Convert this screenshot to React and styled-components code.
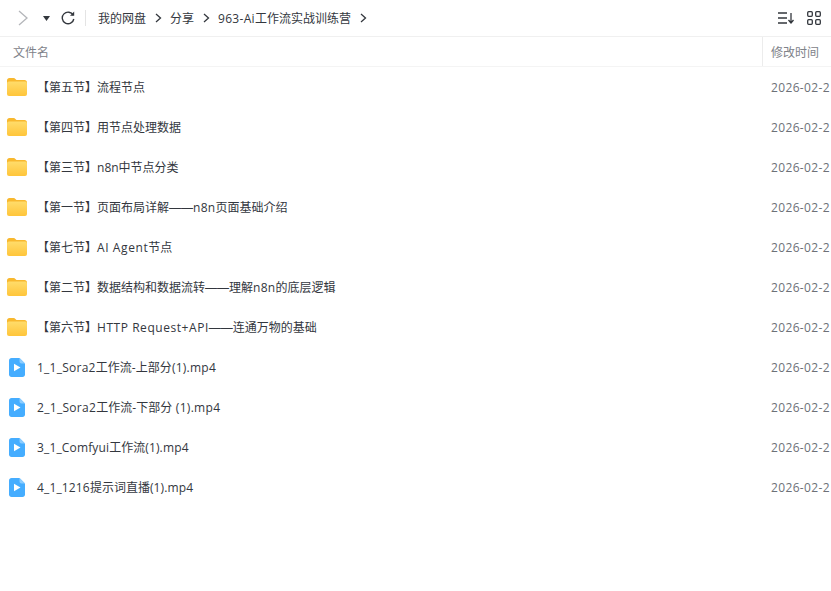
import styled, { createGlobalStyle } from "styled-components";

const GlobalStyle = createGlobalStyle`
	html, body {
		margin: 0;
		height: 100%;
		background: #fff;
		overflow: hidden;
	}
	body {
		font-family: "Noto Sans CJK SC", sans-serif;
	}
`;

const Page = styled.div`
	width: 831px;
	height: 591px;
	overflow: hidden;
	color: #33373e;
`;

const Toolbar = styled.div`
	display: flex;
	align-items: center;
	height: 36px;
	border-bottom: 1px solid #f0f0f0;
	padding-left: 18px;
`;

const NavButton = styled.span`
	display: flex;
	align-items: center;
	justify-content: center;
	margin-left: ${(p) => p.$gap || 0}px;
`;

const Divider = styled.span`
	width: 1px;
	height: 16px;
	background: #e4e4e4;
	margin: 0 12px 0 10px;
`;

const Crumbs = styled.div`
	display: flex;
	align-items: center;
	flex: 1;
	font-size: 12px;
	line-height: 20px;
	color: #33373e;
`;

const Crumb = styled.span`
	display: flex;
	align-items: center;
	white-space: nowrap;
`;

const CrumbArrow = styled.svg`
	width: 7px;
	height: 10px;
	margin: 0 8px 0 9px;
`;

const ToolIcons = styled.div`
	display: flex;
	align-items: center;
	gap: 13px;
	padding-right: 10px;
`;

const HeaderRow = styled.div`
	display: flex;
	align-items: stretch;
	height: 29px;
	border-bottom: 1px solid #f4f4f4;
	font-size: 12px;
	color: #7e8289;
`;

const NameHead = styled.div`
	flex: 1;
	display: flex;
	align-items: center;
	padding-left: 13px;
`;

const DateHead = styled.div`
	width: 60px;
	display: flex;
	align-items: center;
	padding-left: 8px;
	border-left: 1px solid #ececec;
`;

const List = styled.div`
	display: flex;
	flex-direction: column;
`;

const Row = styled.div`
	display: flex;
	align-items: center;
	height: 40px;
	font-size: 12px;
	line-height: 20px;
`;

const IconCell = styled.div`
	width: 37px;
	flex: none;
	display: flex;
	align-items: center;
	padding-left: ${(p) => (p.$video ? 9 : 7)}px;
	box-sizing: border-box;
`;

const Name = styled.div`
	flex: 1;
	white-space: nowrap;
	color: #33373e;
`;

// the latin runs are set a bit wider than the font gives them
const Latin = styled.span`
	font-family: "Open Sans", sans-serif;
	line-height: 1;
	letter-spacing: ${(p) => p.$tracking ?? 0.3}px;
`;

const Dash = styled.span`
	font-family: "Liberation Sans", sans-serif;
	line-height: 1;
`;

const DateCell = styled.div`
	width: 60px;
	white-space: nowrap;
	color: #6d7178;
	overflow: hidden;
`;

const Mixed = ({ text, tracking }) =>
	text.split(/([\x20-\x7e]+|——)/).map((part, i) => {
		if (i % 2 === 0) return part;
		if (part === "——") return <Dash key={i}>{part}</Dash>;
		return (
			<Latin key={i} $tracking={tracking}>
				{part}
			</Latin>
		);
	});

const FolderIcon = () => (
	<svg width="20" height="18" viewBox="0 0 20 18">
		<defs>
			<linearGradient id="folderFront" x1="0" y1="0" x2="0" y2="1">
				<stop offset="0" stopColor="#ffdc6b" />
				<stop offset="1" stopColor="#ffc53a" />
			</linearGradient>
		</defs>
		<path
			d="M0 2.500C0 1.100 1 0 2.400 0h4.200c.8 0 1.300.3 1.800.9L9.500 2H17.500C19 2 20 3 20 4.500V8H0Z"
			fill="#f8b82e"
		/>
		<rect x="0" y="3.500" width="20" height="14.500" rx="2" fill="url(#folderFront)" />
	</svg>
);

const VideoIcon = () => (
	<svg width="16" height="19" viewBox="0 0 16 19">
		<path
			d="M2.500 0H10.500L16 5.500V16.500C16 17.900 14.900 19 13.500 19H2.500C1.100 19 0 17.900 0 16.500V2.500C0 1.100 1.100 0 2.500 0Z"
			fill="#45adff"
		/>
		<path d="M10.500 0L16 5.500H12.500C11.400 5.500 10.500 4.600 10.500 3.500Z" fill="#8ccdff" />
		<path d="M5 5.800L11.500 9.500L5 13.200Z" fill="#fff" />
	</svg>
);

const rows = [
	{ name: "【第五节】流程节点" },
	{ name: "【第四节】用节点处理数据" },
	{ name: "【第三节】n8n中节点分类", tracking: 0 },
	{ name: "【第一节】页面布局详解——n8n页面基础介绍" },
	{ name: "【第七节】AI Agent节点", tracking: 0.6 },
	{ name: "【第二节】数据结构和数据流转——理解n8n的底层逻辑" },
	{ name: "【第六节】HTTP Request+API——连通万物的基础", tracking: 0.55 },
	{ name: "1_1_Sora2工作流-上部分(1).mp4", video: true, tracking: 0.25 },
	{ name: "2_1_Sora2工作流-下部分 (1).mp4", video: true },
	{ name: "3_1_Comfyui工作流(1).mp4", video: true, tracking: 0.15 },
	{ name: "4_1_1216提示词直播(1).mp4", video: true, tracking: 0.15 },
];

const crumbs = ["我的网盘", "分享", "963-Ai工作流实战训练营"];

export default function App() {
	return (
		<Page>
			<GlobalStyle />
			<Toolbar>
				<NavButton>
					<svg width="10" height="16" viewBox="0 0 10 16">
						<path d="M1 1l8 7-8 7" fill="none" stroke="#b4b6ba" strokeWidth="1.300" />
					</svg>
				</NavButton>
				<NavButton $gap={15}>
					<svg width="7" height="5" viewBox="0 0 7 5">
						<path d="M0 0h7L3.500 5Z" fill="#33373d" />
					</svg>
				</NavButton>
				<NavButton $gap={11}>
					<svg width="14" height="14" viewBox="0 0 14 14">
						<path
							d="M12.200 4.200A5.800 5.800 0 1 0 12.800 8"
							fill="none"
							stroke="#33373d"
							strokeWidth="1.400"
						/>
						<path d="M9 4.800h4.200V.6Z" fill="#33373d" />
					</svg>
				</NavButton>
				<Divider />
				<Crumbs>
					{crumbs.map((crumb) => (
						<Crumb key={crumb}>
							<span>
								<Mixed text={crumb} />
							</span>
							<CrumbArrow viewBox="0 0 7 10">
								<path d="M1 1l4.500 4L1 9" fill="none" stroke="#33373d" strokeWidth="1.300" />
							</CrumbArrow>
						</Crumb>
					))}
				</Crumbs>
				<ToolIcons>
					<svg width="16" height="12" viewBox="0 0 16 12">
						<path
							d="M0 1h9M0 6h9M0 11h9M13 1v9.500M10.500 8l2.500 3 2.500-3"
							fill="none"
							stroke="#33373d"
							strokeWidth="1.300"
						/>
					</svg>
					<svg width="14" height="14" viewBox="0 0 14 14">
						<g fill="none" stroke="#33373d" strokeWidth="1.300">
							<rect x=".7" y=".7" width="4.600" height="4.600" rx="1" />
							<rect x="8.700" y=".7" width="4.600" height="4.600" rx="1" />
							<rect x=".7" y="8.700" width="4.600" height="4.600" rx="1" />
							<rect x="8.700" y="8.700" width="4.600" height="4.600" rx="1" />
						</g>
					</svg>
				</ToolIcons>
			</Toolbar>
			<HeaderRow>
				<NameHead>文件名</NameHead>
				<DateHead>修改时间</DateHead>
			</HeaderRow>
			<List>
				{rows.map((row) => (
					<Row key={row.name}>
						<IconCell $video={row.video}>
							{row.video ? <VideoIcon /> : <FolderIcon />}
						</IconCell>
						<Name>
							<Mixed text={row.name} tracking={row.tracking} />
						</Name>
						<DateCell>
							<Mixed text="2026-02-2" tracking={0.35} />
						</DateCell>
					</Row>
				))}
			</List>
		</Page>
	);
}
